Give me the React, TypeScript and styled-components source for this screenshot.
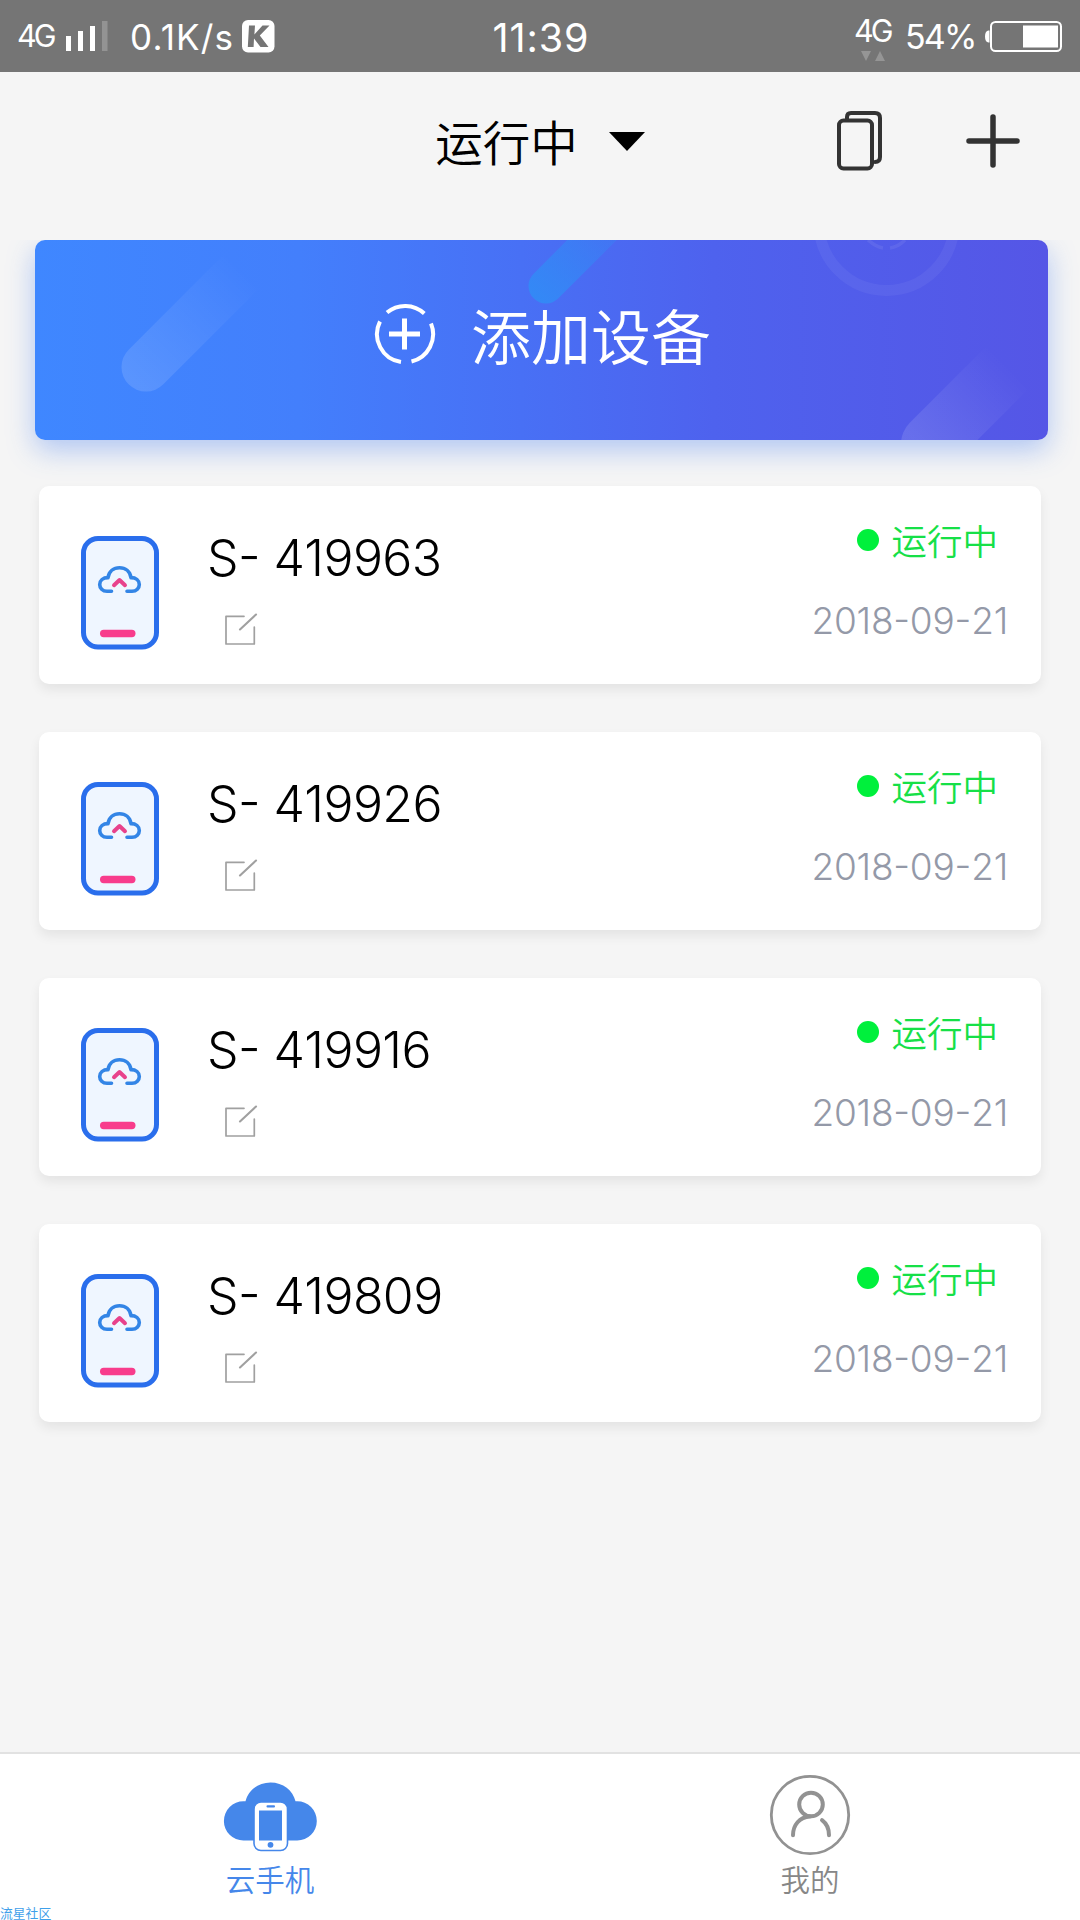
import React from "react";
import styled, { createGlobalStyle } from "styled-components";

const GlobalStyle = createGlobalStyle`
  *, *::before, *::after { box-sizing: border-box; }
  body {
    margin: 0;
    background: #f5f5f5;
    font-family: Inter, "Noto Sans CJK SC", sans-serif;
    -webkit-font-smoothing: antialiased;
  }
  svg { display: block; flex: none; }
`;

const Screen = styled.div`
  width: 1080px;
  height: 1920px;
  display: flex;
  flex-direction: column;
  background: #f5f5f5;
  overflow: hidden;
  position: relative;
`;

const StatusBar = styled.header`
  height: 72px;
  flex: none;
  display: grid;
  grid-template-columns: 1fr auto 1fr;
  align-items: center;
  padding: 0 17px 0 17px;
  background: #757575;
  color: #fff;
`;

const StatusGroup = styled.div<{ $end?: boolean }>`
  display: flex;
  align-items: center;
  justify-content: ${(p) => (p.$end ? "flex-end" : "flex-start")};
`;

const StatusText = styled.span<{ $size: number; $width: number; $track?: number; $drop?: number }>`
  width: ${(p) => p.$width}px;
  padding-top: ${(p) => p.$drop ?? 0}px;
  font-size: ${(p) => p.$size}px;
  letter-spacing: ${(p) => p.$track ?? 0}px;
  line-height: 40px;
  white-space: nowrap;
`;

const Clock = styled.span`
  font-size: 39.5px;
  line-height: 40px;
  letter-spacing: 0.9px;
  padding: 3px 0 0 2px;
`;

const DataNetwork = styled.div`
  display: flex;
  flex-direction: column;
  align-items: flex-start;
  width: 51px;
  height: 72px;
  padding-top: 11px;
`;

const TitleBar = styled.nav`
  height: 168px;
  flex: none;
  display: grid;
  grid-template-columns: 1fr auto 1fr;
  align-items: start;
  padding: 36px 60px 0 60px;
`;

const FilterButton = styled.div`
  grid-column: 2;
  display: flex;
  align-items: center;
  gap: 31px;
  height: 66px;
  font-size: 47.5px;
  font-weight: 350;
  line-height: 68px;
  color: #000;
`;

const FilterName = styled.span`
  padding-top: 5px;
`;

const Actions = styled.div`
  display: flex;
  justify-content: flex-end;
  align-items: center;
  gap: 83px;
  height: 65px;
`;

const Content = styled.main`
  flex: 1;
  display: flex;
  flex-direction: column;
  padding: 0 32px 0 35px;
`;

const Banner = styled.section`
  height: 200px;
  flex: none;
  display: grid;
  border-radius: 10px;
  background: linear-gradient(90deg, #3f87ff 0%, #437ffc 26%, #4870f5 48%, #4e62ee 67%, #5556e6 100%);
  box-shadow: 0 10px 28px rgba(62, 120, 240, 0.38);
  clip-path: inset(0 -35px -50px -35px);
`;

const BannerArt = styled.svg`
  grid-area: 1 / 1;
  border-radius: 10px;
`;

const BannerLabel = styled.div`
  grid-area: 1 / 1;
  display: flex;
  align-items: center;
  gap: 34px;
  height: 187px;
  padding-left: 338px;
  color: #fff;
  font-size: 60px;
  font-weight: 350;
  line-height: 88px;
  white-space: nowrap;
`;

const BannerText = styled.span`
  padding-top: 8px;
`;

const DeviceList = styled.ul`
  list-style: none;
  margin: 46px 7px 0 4px;
  padding: 0;
  display: flex;
  flex-direction: column;
  gap: 48px;
`;

const DeviceCard = styled.li`
  height: 198px;
  display: flex;
  padding: 0 33px 0 42px;
  background: #fff;
  border-radius: 10px;
  box-shadow: 0 6px 12px rgba(0, 0, 0, 0.07);
`;

const DeviceIconSlot = styled.div`
  padding-top: 50px;
  width: 126px;
`;

const DeviceInfo = styled.div`
  flex: 1;
  padding-top: 42px;
`;

const DeviceName = styled.div`
  font-size: 50px;
  font-weight: 350;
  line-height: 60px;
  letter-spacing: -0.6px;
  font-kerning: none;
  font-feature-settings: "case" 1, "calt" 0;
  color: #000;
  white-space: pre;
`;

const EditSlot = styled.div`
  padding: 25px 0 0 18px;
`;

const DeviceMeta = styled.div`
  display: flex;
  flex-direction: column;
  align-items: flex-end;
  padding-top: 29px;
`;

const Status = styled.div`
  display: flex;
  align-items: center;
  gap: 12px;
  height: 52px;
  padding-right: 10px;
  color: #16e047;
  font-size: 35.5px;
  font-weight: 350;
  line-height: 52px;
`;

const StatusName = styled.span`
  padding-top: 4px;
`;

const Dot = styled.i`
  width: 22px;
  height: 22px;
  margin-bottom: 2px;
  border-radius: 50%;
  background: #00f03c;
`;

const DateText = styled.time`
  margin-top: 31px;
  font-size: 37px;
  font-weight: 320;
  line-height: 46px;
  letter-spacing: -0.2px;
  font-kerning: none;
  font-feature-settings: "case" 1, "calt" 0;
  color: #9499a8;
  white-space: nowrap;
`;

const TabBar = styled.footer`
  height: 168px;
  flex: none;
  display: grid;
  grid-template-columns: 1fr 1fr;
  background: #fff;
  border-top: 2px solid #e2e2e2;
`;

const Tab = styled.div<{ $active?: boolean }>`
  display: flex;
  flex-direction: column;
  align-items: center;
  gap: 1px;
  padding-top: 19px;
  color: ${(p) => (p.$active ? "#4587ea" : "#878787")};
  font-size: 29.5px;
  font-weight: 350;
  line-height: 44px;
`;

const Watermark = styled.span`
  position: absolute;
  left: 0;
  bottom: 0;
  font-size: 12.8px;
  line-height: 12px;
  color: #3fa0ea;
`;

const SignalIcon = () => (
  <svg width="42" height="30" viewBox="0 0 42 30" fill="#fff">
    <rect x="0" y="15" width="5" height="15" />
    <rect x="12" y="10" width="5" height="20" />
    <rect x="24" y="5" width="5" height="25" />
    <rect x="36" y="0" width="5.5" height="30" opacity=".22" />
  </svg>
);

const KBadge = () => (
  <svg width="33" height="33" viewBox="0 0 33 33">
    <rect width="32.5" height="32.5" rx="6" fill="#fff" />
    <path d="M7 5.500H13L12.400 14.500L20.500 5.500H27.500L17.800 15.500L26.500 27H18.500L12 18.500L11.600 27H5.800Z" fill="#757575" />
  </svg>
);

const DataArrows = () => (
  <svg width="38" height="11" viewBox="0 0 38 11" fill="#959595">
    <path d="M7 0h10l-5 10zM21 10h10L26 0z" />
  </svg>
);

const BatteryIcon = () => (
  <svg width="78" height="31" viewBox="0 0 78 31">
    <path d="M4.5 9.5h-1Q0 10 0 15.5t3.500 6h1z" fill="#fff" />
    <rect x="6" y="1" width="70" height="29" rx="4.500" fill="none" stroke="#fff" strokeWidth="2" />
    <rect x="38" y="4.500" width="35" height="22" fill="#fff" />
  </svg>
);

const CopyIcon = () => (
  <svg width="46" height="60" viewBox="0 0 46 60" fill="none" stroke="#333" strokeWidth="4" strokeLinecap="round">
    <rect x="2" y="9.500" width="33" height="48" rx="4.500" />
    <path d="M10 8V6q0-4 4-4h24q5 0 5 5v39q0 5-5 5" />
  </svg>
);

const PlusIcon = () => (
  <svg width="54" height="54" viewBox="0 0 54 54" stroke="#333" strokeWidth="5.500" strokeLinecap="round">
    <path d="M27 3v48M3 27h48" />
  </svg>
);

const AddRingIcon = () => (
  <svg width="64" height="64" viewBox="0 0 64 64" fill="none" stroke="#fff" strokeWidth="4">
    <path d="M14 10.600A28 28 0 0 1 51.300 11.500" />
    <path d="M7 19.500A28.200 28.200 0 0 0 28 60" />
    <path d="M58 21.500A28.200 28.200 0 0 1 38.500 59.500" />
    <path d="M31.500 16.500v31M16 32h31" strokeWidth="5" />
  </svg>
);

const BannerDecor = () => (
  <BannerArt width="100%" height="200" viewBox="0 0 1013 200" preserveAspectRatio="none">
    <defs>
      <linearGradient id="pillLeft" gradientUnits="userSpaceOnUse" x1="100" y1="140" x2="208" y2="30">
        <stop offset="0" stopColor="#fff" stopOpacity=".13" />
        <stop offset="1" stopColor="#fff" stopOpacity="0" />
      </linearGradient>
      <linearGradient id="pillMid" gradientUnits="userSpaceOnUse" x1="500" y1="57" x2="580" y2="-23">
        <stop offset="0" stopColor="#2f8ef6" stopOpacity=".82" />
        <stop offset="1" stopColor="#2f8ef6" stopOpacity=".2" />
      </linearGradient>
      <linearGradient id="pillRight" gradientUnits="userSpaceOnUse" x1="890" y1="208" x2="973" y2="125">
        <stop offset="0" stopColor="#fff" stopOpacity=".12" />
        <stop offset="1" stopColor="#fff" stopOpacity="0" />
      </linearGradient>
    </defs>
    <g fill="none" strokeLinecap="round">
      <path d="M111 127L231 7" stroke="url(#pillLeft)" strokeWidth="49" />
      <path d="M511 46L591-34" stroke="url(#pillMid)" strokeWidth="35" />
      <path d="M896 204L1000 100" stroke="url(#pillRight)" strokeWidth="60" />
    </g>
    <circle cx="851.500" cy="-17" r="67.500" fill="none" stroke="#fff" strokeOpacity=".05" strokeWidth="11" />
    <path d="M833 0Q841 7 848 8M855 8Q863 7 870 0" fill="none" stroke="#fff" strokeOpacity=".07" strokeWidth="3.500" />
  </BannerArt>
);

const CloudPhoneIcon = () => (
  <svg width="78" height="114" viewBox="0 0 78 114" fill="none" strokeLinecap="round" strokeLinejoin="round">
    <rect x="2.500" y="2.500" width="73" height="108.500" rx="14.500" fill="#eff6ff" stroke="#2a6eec" strokeWidth="5" />
    <path
      d="M30.500 55.300H26C21.500 55.300 18.700 52 18.700 48.500C18.700 44.500 22 41.600 27 41.600C28 35.500 32.500 31.800 38.500 31.800C44.500 31.800 49 35.500 50 41.600C55 41.600 58.300 44.500 58.300 48.500C58.300 52 55.500 55.300 51 55.300H46"
      stroke="#3385e6"
      strokeWidth="3.600"
    />
    <path d="M33 49.200L38.500 44L44 49.200" stroke="#e8428c" strokeWidth="4" />
    <path d="M22.700 97.500H50.800" stroke="#f83c8c" strokeWidth="7.400" />
  </svg>
);

const EditIcon = () => (
  <svg width="33" height="33" viewBox="0 0 33 33" fill="none" stroke="#a0a0a0" strokeLinecap="round" strokeLinejoin="round">
    <path d="M19 3.300H1V31H29.300V14" strokeWidth="1.700" />
    <path d="M15 16.500L31 1.500" strokeWidth="2.100" />
  </svg>
);

const CloudTabIcon = () => (
  <svg width="94" height="84" viewBox="-1 0 94 84">
    <path
      d="M19.500 67.500a19.600 19.600 0 0 1 0-39.200h2C24 17.500 34 9.500 46.500 9.500S69 17.500 71.500 28.300h1.700a19.600 19.600 0 0 1 0 39.200z"
      fill="#4587ea"
    />
    <rect x="30" y="29" width="33.500" height="48.500" rx="7" fill="#fff" stroke="#4587ea" strokeWidth="1.600" />
    <rect x="35" y="37.500" width="23" height="30" fill="#4587ea" />
    <rect x="42.500" y="32.300" width="8.500" height="2.200" rx="1" fill="#4587ea" />
    <circle cx="46.500" cy="71.800" r="2.900" fill="#4587ea" />
  </svg>
);

const ProfileIcon = () => (
  <svg width="84" height="84" viewBox="0 0 84 84" fill="none" stroke="#929292" strokeLinecap="round">
    <circle cx="42" cy="42" r="38.700" strokeWidth="2.800" />
    <circle cx="43" cy="31.500" r="11.800" strokeWidth="4" />
    <path d="M42 43.500C31.500 44 25 52 25 62.200M54 47.200C58.500 50.500 61 56 61 62.200" strokeWidth="4" />
  </svg>
);

const DropdownArrow = () => (
  <svg width="36" height="19" viewBox="0 0 36 19">
    <path d="M0 0h36L18 19z" />
  </svg>
);

const SignalGap = styled.div`
  width: 22px;
  flex: none;
`;

const devices = ["419963", "419926", "419916", "419809"];

export default function App() {
  return (
    <>
      <GlobalStyle />
      <Screen>
        <StatusBar>
          <StatusGroup>
            <StatusText $size={30.5} $width={49} $track={-3}>4G</StatusText>
            <SignalIcon />
            <SignalGap />
            <StatusText $size={35} $width={112} $track={1.2} $drop={2}>0.1K/s</StatusText>
            <KBadge />
          </StatusGroup>
          <Clock>11:39</Clock>
          <StatusGroup $end>
            <DataNetwork>
              <StatusText $size={30.5} $width={40} $track={-3}>4G</StatusText>
              <DataArrows />
            </DataNetwork>
            <StatusText $size={34} $width={80} $track={-1.8} $drop={2}>54%</StatusText>
            <BatteryIcon />
          </StatusGroup>
        </StatusBar>
        <TitleBar>
          <FilterButton>
            <FilterName>运行中</FilterName>
            <DropdownArrow />
          </FilterButton>
          <Actions>
            <CopyIcon />
            <PlusIcon />
          </Actions>
        </TitleBar>
        <Content>
          <Banner>
            <BannerDecor />
            <BannerLabel>
              <AddRingIcon />
              <BannerText>添加设备</BannerText>
            </BannerLabel>
          </Banner>
          <DeviceList>
            {devices.map((id) => (
              <DeviceCard key={id}>
                <DeviceIconSlot>
                  <CloudPhoneIcon />
                </DeviceIconSlot>
                <DeviceInfo>
                  <DeviceName>{`S- ${id}`}</DeviceName>
                  <EditSlot>
                    <EditIcon />
                  </EditSlot>
                </DeviceInfo>
                <DeviceMeta>
                  <Status>
                    <Dot />
                    <StatusName>运行中</StatusName>
                  </Status>
                  <DateText>2018-09-21</DateText>
                </DeviceMeta>
              </DeviceCard>
            ))}
          </DeviceList>
        </Content>
        <TabBar>
          <Tab $active>
            <CloudTabIcon />
            云手机
          </Tab>
          <Tab>
            <ProfileIcon />
            我的
          </Tab>
        </TabBar>
        <Watermark>流星社区</Watermark>
      </Screen>
    </>
  );
}
